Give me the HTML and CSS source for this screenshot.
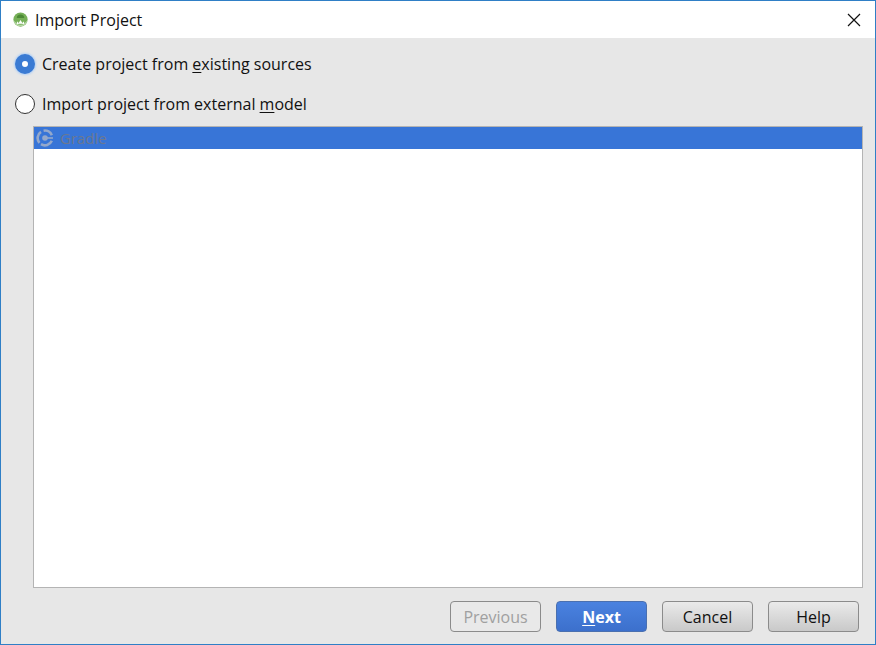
FILE: index.html
```html
<!DOCTYPE html>
<html lang="en">
<head>
<meta charset="utf-8">
<title>Import Project</title>
<link rel="stylesheet" href="styles.css">
</head>
<body>
<form class="dialog">
  <header class="titlebar">
    <svg class="app-icon" viewBox="0 0 16 16" aria-hidden="true">
      <circle cx="8" cy="8" r="7.6" fill="#76b058"/>
      <path d="M.6 9 A7.5 7.5 0 0 0 15.4 9 L12 12 A5.6 5.6 0 0 1 4 12Z" fill="#b4d6a3"/>
      <path d="M4 6.4 A4 3.8 0 0 1 12 6.4Z" fill="#4c8a35"/>
      <path d="M4.2 13 V9.8 L6 11.6 L8 8.6 L10 11.6 L11.8 9.8 V13 L10 12.6 H6Z" fill="#fff"/>
    </svg>
    <h1 class="title">Import Project</h1>
    <button type="button" class="close" aria-label="Close">
      <svg viewBox="0 0 14 14" aria-hidden="true"><path d="M1 1 L13 13 M13 1 L1 13" stroke="#111" stroke-width="1.2" fill="none"/></svg>
    </button>
  </header>
  <main class="content">
    <label class="option"><input type="radio" name="source" checked><span>Create project from <u>e</u>xisting sources</span></label>
    <label class="option"><input type="radio" name="source"><span>Import project from external <u>m</u>odel</span></label>
    <ul class="models">
      <li class="model">
        <svg class="gradle" viewBox="0 0 18 18" fill="none" stroke="#94a8cb" aria-hidden="true">
          <circle cx="9" cy="9" r="2.8" fill="#94a8cb" stroke="none"/>
          <path d="M5 2.8 A7.4 7.4 0 0 0 3.4 13.8 M5 15.2 A7.4 7.4 0 0 0 15.8 11.8 M15.8 6.2 A7.4 7.4 0 0 0 7.6 1.7" stroke-width="2.6"/>
          <path d="M11 9 H17" stroke-width="1.6"/>
        </svg>
        <span>Gradle</span>
      </li>
    </ul>
  </main>
  <footer class="actions">
    <button type="button" class="btn" disabled>Previous</button>
    <button type="submit" class="btn primary"><u>N</u>ext</button>
    <button type="button" class="btn">Cancel</button>
    <button type="button" class="btn">Help</button>
  </footer>
</form>
</body>
</html>
```
FILE: styles.css
```css
* {
  box-sizing: border-box;
}

body {
  margin: 0;
  font: 16px/22px "Open Sans", "Noto Sans", sans-serif;
  color: #111;
}

u {
  text-decoration-thickness: 1px;
  text-underline-offset: 2px;
}

.dialog {
  display: flex;
  flex-direction: column;
  min-height: 100vh;
  border: 1px solid #2f7fc6;
  background: #e7e7e7;
}

.titlebar {
  display: flex;
  align-items: center;
  gap: 7px;
  height: 37px;
  padding: 0 14px 0 12px;
  background: #fff;
}

.app-icon {
  width: 15px;
  height: 15px;
}

.title {
  flex: 1;
  margin: 0;
  font-size: 16px;
  font-weight: 400;
}

.close {
  display: flex;
  padding: 0;
  border: 0;
  background: none;
}

.close svg {
  width: 14px;
  height: 14px;
}

.content {
  display: flex;
  flex: 1;
  flex-direction: column;
  padding: 14px 12px 0 14px;
}

.option {
  display: flex;
  align-items: center;
  align-self: flex-start;
  gap: 7px;
  height: 24px;
  margin-bottom: 16px;
}

.option + .option {
  margin-bottom: 10px;
}

.option input {
  appearance: none;
  width: 20px;
  height: 20px;
  margin: 0;
  border: 1px solid #333;
  border-radius: 50%;
  background: #fff;
}

.option input:checked {
  border: 7px solid #3b7bd3;
  box-shadow: 0 0 2px 1px #b5d2f5;
}

.models {
  flex: 1;
  margin: 0 0 0 18px;
  padding: 0;
  border: 1px solid #b4b4b4;
  background: #fff;
  list-style: none;
}

.model {
  display: flex;
  align-items: center;
  gap: 6px;
  padding-left: 2px;
  background: #3875d7;
  color: #6b7891;
  font-size: 15px;
}

.gradle {
  width: 18px;
  height: 18px;
}

.actions {
  display: flex;
  justify-content: flex-end;
  gap: 15px;
  padding: 13px 16px 12px;
}

.btn {
  width: 91px;
  height: 31px;
  padding: 0;
  border: 1px solid #8b8b8b;
  border-radius: 4px;
  background: linear-gradient(#eaeaea, #c9c9c9);
  color: #111;
  font: inherit;
}

.btn:disabled {
  background: #e9e9e9;
  color: #a0a0a0;
}

.primary {
  border-color: #4a70b0;
  background: linear-gradient(#4a82e0, #3c70cc);
  color: #fff;
  font-weight: 700;
}
```
